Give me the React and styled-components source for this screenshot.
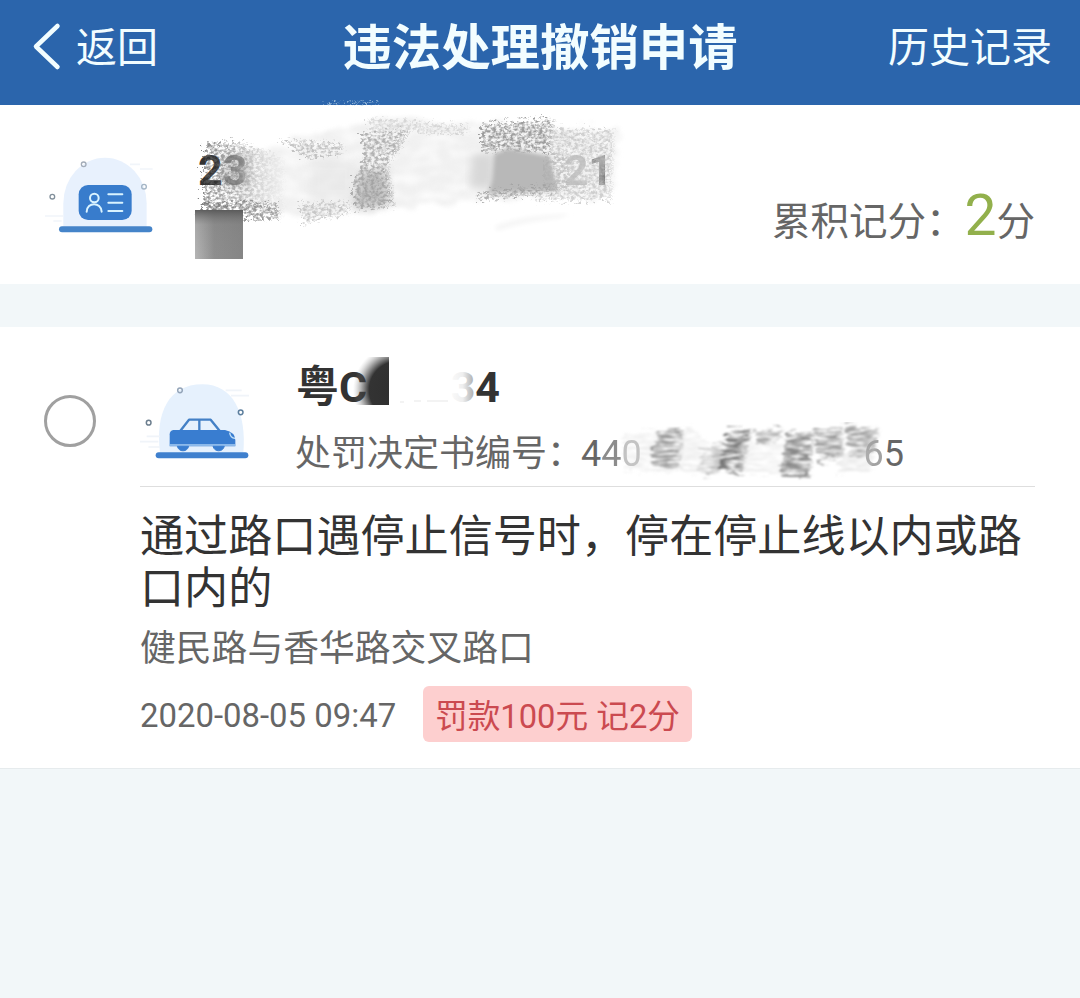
import React from 'react';
import styled, { createGlobalStyle } from 'styled-components';

const GlobalStyle = createGlobalStyle`
  * { box-sizing: border-box; }
  body {
    margin: 0;
    background: #f2f7f9;
    font-family: Roboto, "Noto Sans CJK SC", sans-serif;
    color: #333;
  }
`;

const Page = styled.div`
  width: 1080px;
  min-height: 998px;
  background: #f2f7f9;
  overflow: hidden;
`;

const Header = styled.header`
  height: 105px;
  padding: 0 28px 9px 32px;
  display: grid;
  grid-template-columns: 1fr auto 1fr;
  align-items: center;
  background: #2b65ac;
  color: #f2fdff;
`;

const HeaderAction = styled.div`
  display: flex;
  align-items: center;
  justify-content: ${p => (p.$end ? 'flex-end' : 'flex-start')};
  font-size: 41px;
  line-height: 60px;
`;

const BackArrow = styled.svg`
  width: 30px;
  height: 50px;
  margin: -4px 14px 0 0;
`;

const Title = styled.h1`
  margin: 0 4px 0 0;
  font-size: 49.4px;
  line-height: 70px;
  font-weight: 700;
`;

const Panel = styled.section`
  position: relative;
  display: flex;
  align-items: flex-start;
  background: #fff;
`;

const Account = styled(Panel)`
  height: 179px;
  padding: 35px 45px 0 30px;
`;

const AccountArt = styled.svg`
  width: 150px;
  height: 110px;
`;

const Licence = styled.div`
  display: flex;
  justify-content: space-between;
  width: 415px;
  margin: 5px 0 0 18px;
  font-size: 43px;
  line-height: 50px;
  font-weight: 700;
`;

const Faded = styled.span`
  opacity: ${p => p.$level};
`;

const Points = styled.div`
  display: flex;
  align-items: baseline;
  margin: 36px 0 0 auto;
  font-size: 38.5px;
  line-height: 80px;
  color: #666;
`;

const PointsValue = styled.span`
  font-size: 57px;
  color: #92b04c;
`;

const Smudge = styled.svg`
  position: absolute;
  left: ${p => p.$x}px;
  top: ${p => p.$y}px;
  pointer-events: none;
`;

const Violation = styled(Panel)`
  height: 442px;
  margin-top: 43px;
  padding: 30px 45px 0 44px;
  border-bottom: 1px solid #e6ebed;
`;

const Radio = styled.span`
  flex: none;
  width: 52px;
  height: 52px;
  margin: 38px 44px 0 0;
  border: 3px solid #a0a0a0;
  border-radius: 50%;
`;

const Details = styled.div`
  flex: 1;
  min-width: 0;
`;

const Vehicle = styled.div`
  display: flex;
  height: 130px;
  border-bottom: 1px solid #dedede;
`;

const VehicleArt = styled.svg`
  flex: none;
  width: 140px;
  height: 105px;
  margin: 13px 26px 0 -10px;
`;

const VehicleText = styled.div`
  flex: 1;
`;

const Plate = styled.div`
  display: flex;
  width: 204px;
  font-size: 43px;
  line-height: 60px;
  font-weight: 700;
`;

const PlateTail = styled.span`
  margin-left: auto;
`;

const Decision = styled.div`
  display: flex;
  width: 609px;
  margin: 7px 0 0 -1px;
  font-size: 36px;
  line-height: 60px;
  color: #666;
`;

const DecisionLabel = styled.span`
  width: 286px;
  white-space: nowrap;
`;

const Reason = styled.div`
  width: 890px;
  margin-top: 24px;
  font-size: 44.1px;
  line-height: 52px;
  color: #333;
`;

const Place = styled.div`
  margin-top: 8px;
  font-size: 35.8px;
  line-height: 52px;
  color: #666;
`;

const Meta = styled.div`
  display: flex;
  align-items: center;
  margin-top: 11px;
  font-size: 32.9px;
  color: #666;
`;

const Stamp = styled.span`
  width: 283px;
  height: 56px;
  line-height: 60px;
`;

const Tag = styled.span`
  height: 56px;
  padding: 0 12px;
  border-radius: 6px;
  background: #fdcfcf;
  color: #cb4a50;
  font-size: 32.7px;
  line-height: 62px;
  white-space: nowrap;
`;

function Grain({ id, freq, seed, cut = 4, shift = -1.7, rough = 12, blur = 0.8 }) {
  return (
    <filter id={id} x="-10%" y="-10%" width="120%" height="120%">
      <feTurbulence type="fractalNoise" baseFrequency={freq} numOctaves="3" seed={seed} result="n" />
      <feDisplacementMap in="SourceGraphic" in2="n" scale={rough} xChannelSelector="R" yChannelSelector="G" result="d" />
      <feColorMatrix in="n" type="matrix" values={`0 0 0 0 1  0 0 0 0 1  0 0 0 0 1  ${cut} 0 0 0 ${shift}`} result="a" />
      <feComposite in="d" in2="a" operator="in" />
      <feGaussianBlur stdDeviation={blur} />
    </filter>
  );
}

function LicenceSmudge() {
  return (
    <Smudge $x={180} $y={-10} width="460" height="175" viewBox="180 95 460 175">
      <defs>
        <Grain id="coarse" freq="0.28 0.36" seed={4} cut={3} shift={-1.05} rough={20} blur={0.7} />
        <Grain id="wash" freq="0.05 0.12" seed={9} cut={2} shift={-0.2} rough={20} blur={2} />
        <filter id="soft" x="-20%" y="-20%" width="140%" height="140%"><feGaussianBlur stdDeviation="4" /></filter>
        <linearGradient id="darkToLight">
          <stop offset="0" stopColor="#555" stopOpacity=".75" />
          <stop offset=".5" stopColor="#777" stopOpacity=".5" />
          <stop offset="1" stopColor="#aaa" stopOpacity=".08" />
        </linearGradient>
        <linearGradient id="block">
          <stop offset="0" stopColor="#b5b5b5" />
          <stop offset=".4" stopColor="#8e8e8e" />
          <stop offset="1" stopColor="#858585" />
        </linearGradient>
        <linearGradient id="blockTop" x2="0" y2="1">
          <stop offset="0" stopColor="#555" stopOpacity=".9" />
          <stop offset=".3" stopColor="#777" stopOpacity=".2" />
          <stop offset="1" stopColor="#888" stopOpacity="0" />
        </linearGradient>
      </defs>
      <path d="M240 155 L300 140 L372 118 L470 122 L620 128 L612 196 L480 200 L390 208 L305 218 L240 205Z" fill="#e6e6e6" opacity=".6" filter="url(#wash)" />
      <path d="M310 160H355V200H310Z" fill="#e3e3e3" opacity=".5" filter="url(#soft)" />
      <path d="M222 154H250V188H222Z" fill="#999" opacity=".4" filter="url(#soft)" />
      <path d="M206 143 L240 142 L285 158 L285 219 L203 219Z" fill="url(#darkToLight)" filter="url(#coarse)" />
      <path d="M206 202 L280 202 L280 220 L200 220Z" fill="#777" opacity=".65" filter="url(#coarse)" />
      <path d="M278 139 L345 144 L340 155 L308 158Z" fill="#999" opacity=".55" filter="url(#coarse)" />
      <path d="M300 203 L352 202 L350 213 L304 224Z" fill="#aaa" opacity=".6" filter="url(#coarse)" />
      <path d="M362 133 L410 131 L400 150 L388 164 L396 206 L356 210 L353 182 L364 158Z" fill="#888" opacity=".6" filter="url(#coarse)" />
      <path d="M360 172 L386 170 L388 206 L354 208Z" fill="#999" opacity=".55" filter="url(#soft)" />
      <path d="M368 118 L470 126 L468 134 L372 132Z" fill="#bbb" opacity=".5" filter="url(#coarse)" />
      <path d="M482 124 L555 118 L552 152 L482 152Z" fill="#888" opacity=".8" filter="url(#coarse)" />
      <path d="M472 154 L494 153 L494 188 L470 188Z" fill="#d8d8d8" filter="url(#soft)" />
      <path d="M494 154 L508 148 L550 156 L558 190 L488 194 L492 180Z" fill="#b8b8b8" filter="url(#softEdge)" />
      <filter id="softEdge" x="-10%" y="-10%" width="120%" height="120%"><feGaussianBlur stdDeviation="2" /></filter>
      <path d="M480 193 L558 184 L558 193 L478 201Z" fill="#999" opacity=".75" filter="url(#coarse)" />
      <path d="M545 155H570V188H545Z" fill="#aaa" opacity=".5" filter="url(#coarse)" />
      <path d="M553 128 L615 130 L612 201 L530 200 L553 190Z" fill="#bbb" opacity=".65" filter="url(#coarse)" />
      <path d="M495 226 Q520 215 570 214 L560 218 Q525 222 497 231Z" fill="#f6f6f6" filter="url(#softEdge)" />
      <path d="M320 105 L330 103 L345 104 L360 101 L380 101 L378 104 L350 105Z" fill="#c5dceb" opacity=".7" filter="url(#coarse)" />
      <rect x="195" y="210" width="48" height="49" fill="url(#block)" />
      <rect x="195" y="210" width="48" height="49" fill="url(#blockTop)" />
    </Smudge>
  );
}

function PlateSmudge() {
  return (
    <Smudge $x={350} $y={26} width="130" height="60" viewBox="350 353 130 60">
      <defs>
        <radialGradient id="plateDark" gradientUnits="userSpaceOnUse" cx="398" cy="390" r="45">
          <stop offset="0" stopColor="#2e2e2e" />
          <stop offset=".64" stopColor="#333" />
          <stop offset=".8" stopColor="#444" stopOpacity=".5" />
          <stop offset="1" stopColor="#999" stopOpacity="0" />
        </radialGradient>
        <linearGradient id="fade">
          <stop offset="0" stopColor="#fff" />
          <stop offset=".6" stopColor="#fff" stopOpacity=".92" />
          <stop offset="1" stopColor="#fff" stopOpacity=".6" />
        </linearGradient>
      </defs>
      <rect x="352" y="357" width="37" height="48" fill="url(#plateDark)" />
      <rect x="446" y="368" width="28" height="38" fill="url(#fade)" />
      <path d="M400 402h4M414 401h7M427 401h21" stroke="#f3f3f3" strokeWidth="2" />
    </Smudge>
  );
}

function NumberSmudge() {
  return (
    <Smudge $x={600} $y={93} width="310" height="62" viewBox="600 420 310 62">
      <defs>
        <Grain id="streak" freq="0.07 0.36" seed={3} cut={2.4} shift={-0.6} rough={16} blur={0.9} />
      </defs>
      <g filter="url(#streak)">
        <path d="M625 434 L690 428 L708 440 L720 474 L625 471Z" fill="#ccc" opacity=".3" />
        <path d="M660 428 L684 428 L680 469 L650 464Z" fill="#999" />
        <path d="M703 446 L728 443 L724 472 L699 474Z" fill="#bbb" />
        <path d="M729 429 L752 430 L743 473 L720 471Z" fill="#777" />
        <path d="M754 430 L784 429 L778 440 L758 444Z" fill="#aaa" />
        <path d="M740 442 L785 442 L780 475 L742 473Z" fill="#ddd" opacity=".4" />
        <path d="M787 431 L814 434 L810 477 L779 477Z" fill="#888" />
        <path d="M814 431 L842 427 L844 456 L820 463Z" fill="#999" />
        <path d="M845 427 L878 428 L876 454 L850 457Z" fill="#a2a2a2" />
        <path d="M840 454 L878 448 L870 471 L838 473Z" fill="#ccc" opacity=".4" />
      </g>
    </Smudge>
  );
}

export default function App() {
  return (
    <Page>
      <GlobalStyle />
      <Header>
        <HeaderAction>
          <BackArrow viewBox="0 0 30 50" fill="none" stroke="currentColor" strokeWidth="4.5" strokeLinecap="round" strokeLinejoin="round">
            <path d="M25.500 5L4 25.500L25.500 46" />
          </BackArrow>
          返回
        </HeaderAction>
        <Title>违法处理撤销申请</Title>
        <HeaderAction $end>历史记录</HeaderAction>
      </Header>

      <Account>
        <AccountArt viewBox="0 0 450 330" fill="none">
          <path d="M100 262V190A125 137 0 0 1 350 190V262Z" fill="#e8f1fd" />
          <path d="M300 73H330M330 87H368M45 228H100M70 243H95" stroke="#f1f5fa" strokeWidth="5" />
          <rect x="146" y="135" width="159" height="105" rx="28" fill="#387ccc" />
          <g stroke="#d9f3ff" strokeWidth="6" strokeLinecap="round">
            <circle cx="193" cy="174" r="13" />
            <path d="M170 215C171 185 213 185 215 215M235 163H277M235 188H277M235 213H277" />
          </g>
          <path d="M96 268H358" stroke="#4584c9" strokeWidth="18" strokeLinecap="round" />
          <g strokeWidth="4">
            <circle cx="161" cy="73" r="7" stroke="#a4adb9" />
            <circle cx="342" cy="140" r="7" stroke="#a4b5c5" />
            <circle cx="67" cy="170" r="7" stroke="#82909b" />
          </g>
        </AccountArt>
        <Licence>
          <span>2<Faded $level={0.6}>3</Faded></span>
          <span><Faded $level={0.4}>2</Faded><Faded $level={0.8}>1</Faded></span>
        </Licence>
        <Points>累积记分：<PointsValue>2</PointsValue>分</Points>
        <LicenceSmudge />
      </Account>

      <Violation>
        <Radio />
        <Details>
          <Vehicle>
            <VehicleArt viewBox="0 0 420 315" fill="none">
              <path d="M90 248C75 130 115 43 217 43C310 43 350 130 340 248Z" fill="#e6f1fd" />
              <path d="M287 61H335M303 77H357M50 199H90M30 215H85M55 231H90" stroke="#f0f4f9" strokeWidth="5" />
              <path d="M150 184L177 149H242L270 184M208 149V184" stroke="#4380c6" strokeWidth="7" strokeLinejoin="round" />
              <path d="M130 180H285Q316 187 316 210V229H119V193Q119 182 130 180Z" fill="#397dd0" />
              <path d="M119 225H316" stroke="#a9cef3" strokeWidth="4" />
              <path d="M299 188Q301 204 315 205" stroke="#c3e1f9" strokeWidth="4" />
              <path d="M142 229A18 20 0 0 0 176 229ZM249 229A18 20 0 0 0 283 229Z" fill="#397dd0" stroke="#397dd0" strokeWidth="3" />
              <path d="M86 256H346" stroke="#3f80ce" strokeWidth="18" strokeLinecap="round" />
              <g strokeWidth="4.500">
                <circle cx="150" cy="61" r="7" stroke="#94a5b9" />
                <circle cx="332" cy="127" r="7" stroke="#5d7f9e" />
                <circle cx="56" cy="158" r="7" stroke="#6d7f8f" />
              </g>
            </VehicleArt>
            <VehicleText>
              <Plate>粤C<PlateTail>34</PlateTail></Plate>
              <Decision>
                <DecisionLabel>处罚决定书编号：</DecisionLabel>
                4<Faded $level={0.75}>4</Faded><Faded $level={0.4}>0</Faded>
                <PlateTail><Faded $level={0.6}>6</Faded>5</PlateTail>
              </Decision>
            </VehicleText>
          </Vehicle>
          <Reason>通过路口遇停止信号时，停在停止线以内或路口内的</Reason>
          <Place>健民路与香华路交叉路口</Place>
          <Meta>
            <Stamp>2020-08-05 09:47</Stamp>
            <Tag>罚款100元 记2分</Tag>
          </Meta>
        </Details>
        <PlateSmudge />
        <NumberSmudge />
      </Violation>
    </Page>
  );
}
